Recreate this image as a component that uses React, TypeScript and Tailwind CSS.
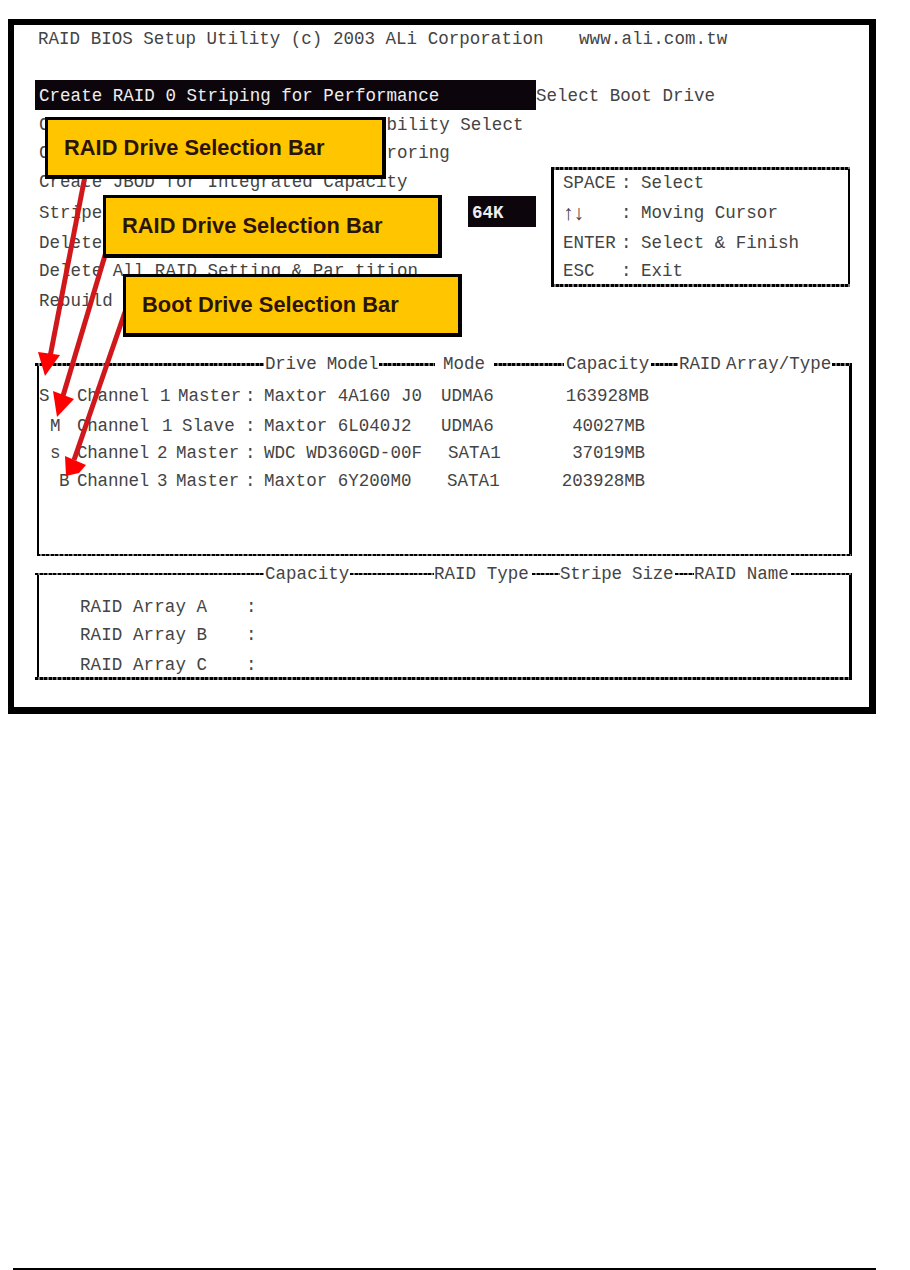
import type { ReactNode } from "react";

const MENU = [
    { text: "C", tail: "bility Select", height: "h-[28px]" },
    { text: "C", tail: "roring", height: "h-[29px]" },
    { text: "Create JBOD for Integrated Capacity", height: "h-[31px]" },
    { text: "Stripe", height: "h-[30px]", value: "64K" },
    { text: "Delete", height: "h-[28px]" },
    { text: "Delete All RAID Setting & Par tition", height: "h-[30px]" },
    { text: "Rebuild", height: "h-[28px]" },
];

const KEYS = [
    { name: "SPACE", action: "Select", height: "h-[30px]", font: "" },
    {
        name: "↑↓", action: "Moving Cursor", height: "h-[30px]",
        font: "font-['Liberation_Serif',serif] text-[21px]",
    },
    { name: "ENTER", action: "Select & Finish", height: "h-[28px]", font: "" },
    { name: "ESC", action: "Exit", height: "h-[28px]", font: "" },
];

const DRIVES = [
    {
        mark: "S", markPad: "pl-0", height: "h-[30px]",
        channel: "1", channelPad: "pl-[3px]", port: "Master", portPad: "pl-[3px]",
        model: "Maxtor 4A160 J0", mode: "UDMA6", modePad: "pl-0", size: "163928MB", sizePad: "pr-0",
    },
    {
        mark: "M", markPad: "pl-[11px]", height: "h-[27px]",
        channel: "1", channelPad: "pl-[5px]", port: "Slave", portPad: "pl-[7px]",
        model: "Maxtor 6L040J2", mode: "UDMA6", modePad: "pl-0", size: "40027MB", sizePad: "pr-[4px]",
    },
    {
        mark: "s", markPad: "pl-[11px]", height: "h-[28px]",
        channel: "2", channelPad: "pl-0", port: "Master", portPad: "pl-[1px]",
        model: "WDC WD360GD-00F", mode: "SATA1", modePad: "pl-[7px]", size: "37019MB", sizePad: "pr-[4px]",
    },
    {
        mark: "B", markPad: "pl-[20px]", height: "h-[28px]",
        channel: "3", channelPad: "pl-0", port: "Master", portPad: "pl-[1px]",
        model: "Maxtor 6Y200M0", mode: "SATA1", modePad: "pl-[6px]", size: "203928MB", sizePad: "pr-[4px]",
    },
];

const ARRAYS = [
    { name: "RAID Array A", height: "h-[28px]" },
    { name: "RAID Array B", height: "h-[30px]" },
    { name: "RAID Array C", height: "h-[25px]" },
];

// thick dotted rule of the text-mode boxes
function Rule({ className }: { className: string }) {
    return (
        <div
            className={`shrink-0 bg-[repeating-linear-gradient(90deg,#000_0_3px,#777_3px_4.6px)] ${className}`}
        />
    );
}

function Label({ className, children }: { className: string; children: ReactNode }) {
    return <span className={`shrink-0 ${className}`}>{children}</span>;
}

function Callout({ className, children }: { className: string; children: string }) {
    return (
        <div
            className={`absolute flex items-center border-[3px] border-r-4 border-b-4 border-black bg-[#ffc600] pl-[16px] font-['Liberation_Sans',sans-serif] text-[21.8px] font-bold tracking-[0.05px] text-[#2b1405] ${className}`}
        >
            {children}
        </div>
    );
}

function Arrows() {
    return (
        <svg
            className="absolute top-[145px] left-[16px]"
            width="120"
            height="312"
            viewBox="30 170 120 312"
        >
            <g stroke="#cf171c" strokeWidth="5" fill="none">
                <path d="M85 176L50 357" />
                <path d="M106 252L63 396" />
                <path d="M125 312L74 460" />
            </g>
            <g fill="#ff0000">
                <path d="M38 352L60 355L45 376Z" />
                <path d="M53 391L74 399L57 417Z" />
                <path d="M65 456L86 465L79 473L66 476Z" />
            </g>
        </svg>
    );
}

export default function App() {
    return (
        <div className="flex h-[1270px] w-[910px] flex-col bg-white pt-[19px] pl-2">
            <div className="relative flex h-[695px] w-[868px] shrink-0 flex-col border-t-[6px] border-r-[7px] border-b-[7px] border-l-[6px] border-black font-['Liberation_Mono',monospace] text-[17.5px] leading-[28px] tracking-[0.03px] whitespace-pre text-[#444]">
                <div className="flex h-[55px] pl-[24px]">
                    <Label className="w-[541px]">RAID BIOS Setup Utility (c) 2003 ALi Corporation</Label>
                    <Label className="tracking-[0.1px]">www.ali.com.tw</Label>
                </div>

                <div className="flex h-[31px] pl-[21px]">
                    <div className="h-[30px] w-[501px] bg-[#0c060c] pt-[2px] pl-[4px] text-[#eee]">
                        Create RAID 0 Striping for Performance
                    </div>
                    <Label className="pt-[2px]">Select Boot Drive</Label>
                </div>

                <div className="flex h-[247px] pl-[25px]">
                    <div className="w-[512px]">
                        {MENU.map((item, i) => (
                            <div key={i} className={`flex pr-[15px] ${item.height}`}>
                                <span>{item.text}</span>
                                {item.tail && <span className="pl-[337px]">{item.tail}</span>}
                                {item.value && (
                                    <span className="-mt-[3px] ml-auto h-[31px] w-[68px] bg-[#0c060c] pt-[3px] pl-[4px] font-bold text-[#eee]">
                                        {item.value}
                                    </span>
                                )}
                            </div>
                        ))}
                    </div>

                    <div className="mt-[56px] h-[121px] w-[299px]">
                        <Rule className="h-[3px] w-full" />
                        <div className="h-[115px] border-r-2 border-l-[3px] border-black pl-[9px]">
                            <div className="-mt-px">
                                {KEYS.map((key) => (
                                    <div key={key.name} className={`flex ${key.height}`}>
                                        <Label className={`w-[58px] ${key.font}`}>{key.name}</Label>
                                        <Label className="w-[20px]">:</Label>
                                        <span>{key.action}</span>
                                    </div>
                                ))}
                            </div>
                        </div>
                        <Rule className="h-[3px] w-full" />
                    </div>
                </div>

                {/* drive list */}
                <div className="ml-[21px] h-[197px] w-[817px]">
                    <div className="-mt-[8px] flex h-[28px] items-center">
                        <Rule className="h-[3px] w-[229px]" />
                        <Label className="w-[115px] pl-[1px] tracking-[-0.2px]">Drive Model</Label>
                        <Rule className="h-[3px] w-[56px]" />
                        <Label className="w-[59px] pl-[8px]">Mode</Label>
                        <Rule className="h-[3px] w-[70px]" />
                        <Label className="w-[87px] pl-[2px] tracking-[-0.1px]">Capacity</Label>
                        <Rule className="h-[3px] w-[27px]" />
                        <Label className="w-[48px] pl-[1px] tracking-[-0.1px]">RAID</Label>
                        <Label className="w-[106px]">Array/Type</Label>
                        <Rule className="h-[3px] w-[20px]" />
                    </div>
                    <div className="-mt-[14px] ml-[2px] h-[190px] border-r-[3px] border-l-2 border-black pt-[18px]">
                        {DRIVES.map((drive) => (
                            <div key={drive.model} className={`flex ${drive.height}`}>
                                <Label className={`w-[37px] ${drive.markPad}`}>{drive.mark}</Label>
                                <Label className="w-[81px] pl-[1px] tracking-[-0.2px]">Channel</Label>
                                <Label className={`w-[18px] ${drive.channelPad}`}>{drive.channel}</Label>
                                <Label className={`w-[70px] ${drive.portPad}`}>{drive.port}</Label>
                                <Label className="w-[19px]">:</Label>
                                <Label className="w-[177px]">{drive.model}</Label>
                                <Label className={`w-[90px] ${drive.modePad}`}>{drive.mode}</Label>
                                <Label className={`w-[118px] text-right tracking-[-0.1px] ${drive.sizePad}`}>
                                    {drive.size}
                                </Label>
                            </div>
                        ))}
                    </div>
                    <Rule className="ml-[2px] h-[2px] w-[815px]" />
                </div>

                {/* array list */}
                <div className="ml-[21px] h-[127px] w-[817px]">
                    <div className="flex h-[28px] items-center pt-[9px]">
                        <Rule className="h-[2px] w-[229px]" />
                        <Label className="w-[86px] pl-[1px]">Capacity</Label>
                        <Rule className="h-[2px] w-[84px]" />
                        <Label className="w-[98px]">RAID Type</Label>
                        <Rule className="h-[2px] w-[28px]" />
                        <Label className="w-[115px] tracking-[-0.2px]">Stripe Size</Label>
                        <Rule className="h-[2px] w-[19px]" />
                        <Label className="w-[97px]">RAID Name</Label>
                        <Rule className="h-[2px] w-[61px]" />
                    </div>
                    <div className="-mt-[9px] ml-[2px] h-[103px] border-r-[3px] border-l-2 border-black pt-[19px]">
                        {ARRAYS.map((array) => (
                            <div key={array.name} className={`flex pl-[41px] ${array.height}`}>
                                <Label className="w-[166px] tracking-[0.1px]">{array.name}</Label>
                                <span>:</span>
                            </div>
                        ))}
                    </div>
                    <Rule className="h-[3px] w-full" />
                </div>

                <Arrows />
                <Callout className="top-[92px] left-[31px] h-[62px] w-[341px]">RAID Drive Selection Bar</Callout>
                <Callout className="top-[170px] left-[89px] h-[63px] w-[339px]">RAID Drive Selection Bar</Callout>
                <Callout className="top-[249px] left-[109px] h-[63px] w-[339px]">Boot Drive Selection Bar</Callout>
            </div>

            <div className="mt-auto ml-[5px] h-[2px] w-[863px] shrink-0 bg-black" />
        </div>
    );
}
